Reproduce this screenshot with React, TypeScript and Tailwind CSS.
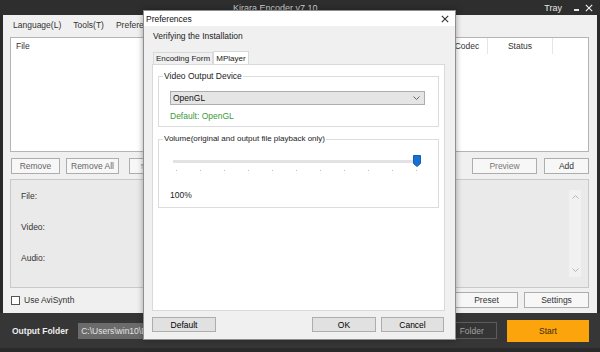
import React from "react";

const mainBtn =
  "h-[16px] border border-[#adadad] bg-[#f7f7f7] flex items-center justify-center shrink-0";
const dlgBtn =
  "h-[15px] border border-[#adadad] bg-[#e1e1e1] flex items-center justify-center text-[#000] shrink-0";

function Chevron({ up }: { up?: boolean }) {
  return (
    <svg width="7" height="4" viewBox="0 0 7 4" className="block">
      <path
        d={up ? "M0.5 3.5 L3.5 0.5 L6.5 3.5" : "M0.5 0.5 L3.5 3.5 L6.5 0.5"}
        fill="none"
        stroke="#b5b5b5"
        strokeWidth="1"
      />
    </svg>
  );
}

function CloseX({ size, color }: { size: number; color: string }) {
  return (
    <svg width={size} height={size} viewBox="0 0 10 10" className="block">
      <path d="M1 1 L9 9 M9 1 L1 9" stroke={color} strokeWidth="1.4" fill="none" />
    </svg>
  );
}

export default function App() {
  const ticks = Array.from({ length: 11 });
  return (
    <div className="relative w-[600px] h-[352px] overflow-hidden bg-[#2a2a2a] text-[8.5px] leading-[10px] text-[#333] font-['Liberation_Sans',Arial,sans-serif]">
      {/* Title bar */}
      <div className="flex h-[15px] items-center bg-[#2e2e2e] text-[#cfcfcf]">
        <span className="pl-[233px] text-[9px]">Kirara Encoder v7.10</span>
        <span className="ml-auto text-[9px] text-[#e6e6e6]">Tray</span>
        <div className="ml-[12px] mt-[5px] w-[5px] h-[2px] bg-[#e6e6e6]" />
        <div className="ml-[6px] mr-[7px]">
          <CloseX size={8} color="#f0f0f0" />
        </div>
      </div>

      {/* Main content */}
      <div className="mx-[3px] h-[298px] bg-[#f0f0f0] flex flex-col pl-[7px] pr-[8px]">
        {/* Menu */}
        <div className="h-[22px] flex items-center gap-[12px] pl-[3px] pb-[2px]">
          <span>Language(L)</span>
          <span>Tools(T)</span>
          <span>Preferences(P)</span>
        </div>

        {/* File list */}
        <div className="h-[115px] bg-white border border-[#b4b4b4]">
          <div className="flex h-[16px] items-center">
            <div className="flex-1 pl-[5px]">File</div>
            <div className="w-[41px] h-full flex items-center justify-center border-l border-[#e6e6e6]">
              Codec
            </div>
            <div className="w-[65px] h-full flex items-center justify-center border-l border-[#e6e6e6]">
              Status
            </div>
            <div className="w-[36px] h-full border-l border-[#e6e6e6]" />
          </div>
        </div>

        {/* Buttons row */}
        <div className="mt-[6px] flex h-[16px] text-[#666]">
          <div className={`${mainBtn} w-[49px] ml-[1px]`}>Remove</div>
          <div className={`${mainBtn} w-[53px] ml-[6px]`}>Remove All</div>
          <div className={`${mainBtn} w-[30px] ml-[10px]`}>↑↑</div>
          <div className={`${mainBtn} w-[65px] ml-auto text-[#777]`}>Preview</div>
          <div className={`${mainBtn} w-[45px] ml-[7px] text-[#333]`}>Add</div>
        </div>

        {/* Info panel */}
        <div className="mt-[5px] h-[109px] bg-[#eaeaea] border border-[#c9c9c9] flex">
          <div className="flex-1 flex flex-col gap-[21px] pl-[10px] pt-[11px]">
            <span>File:</span>
            <span>Video:</span>
            <span>Audio:</span>
          </div>
          <div className="w-[12px] mt-[10px] mb-[10px] mr-[7px] bg-[#f1f1f1] flex flex-col items-center justify-between py-[5px]">
            <Chevron up />
            <Chevron />
          </div>
        </div>

        {/* Bottom row */}
        <div className="mt-[4px] flex h-[16px] items-center">
          <div className="ml-[1px] w-[9px] h-[9px] border border-[#555] bg-white" />
          <span className="ml-[4px]">Use AviSynth</span>
          <div className={`${mainBtn} w-[63px] ml-auto`}>Preset</div>
          <div className={`${mainBtn} w-[65px] ml-[6px]`}>Settings</div>
        </div>
      </div>

      {/* Bottom bar */}
      <div className="h-[35px] bg-[#363636] flex items-center pl-[12px] pr-[11px]">
        <span className="font-bold text-[8.5px] text-[#eeeeee]">Output Folder</span>
        <div className="ml-[10px] w-[362px] h-[16px] bg-[#6b6b6b] flex items-center pl-[3px] text-[#e4e4e4]">
          C:\Users\win10\Desktop
        </div>
        <div className="ml-[6px] w-[51px] h-[17px] border border-[#5c5c5c] bg-[#353535] flex items-center justify-center text-[#a0a0a0]">
          Folder
        </div>
        <div className="ml-auto w-[82px] h-[22px] bg-[#fba40c] flex items-center justify-center text-[#3a2a10]">
          Start
        </div>
      </div>

      {/* Preferences dialog */}
      <div className="absolute left-[143px] top-[10px] w-[313px] h-[330px] bg-[#f0f0f0] border border-[#8f8f8f] shadow-[0_0_6px_rgba(0,0,0,0.35)] flex flex-col text-[#222]">
        <div className="h-[15px] bg-white flex items-center pl-[2px] pr-[6px]">
          <span className="text-[#111]">Preferences</span>
          <div className="ml-auto">
            <CloseX size={8} color="#333" />
          </div>
        </div>
        <div className="flex flex-col pl-[8px] pr-[10px]">
          <div className="pt-[5px] pl-[1px]">Verifying the Installation</div>

          {/* Tabs */}
          <div className="mt-[10px] flex items-end h-[14px] text-[8px]">
            <div className="h-[13px] w-[60px] ml-[1px] border border-b-0 border-[#d9d9d9] bg-[#f0f0f0] flex items-center justify-center">
              Encoding Form
            </div>
            <div className="h-[14px] w-[36px] border border-b-0 border-[#d9d9d9] bg-white flex items-center justify-center">
              MPlayer
            </div>
          </div>

          {/* Tab panel */}
          <div className="h-[247px] bg-white border border-[#d9d9d9] -mt-[1px] px-[5px]">
            <fieldset className="mt-[6px] border border-[#dcdcdc] pb-[5px]">
              <legend className="ml-[4px] px-[1px] leading-[10px]">Video Output Device</legend>
              <div className="mt-[10px] ml-[11px] w-[255px] h-[14px] bg-[#e5e5e5] border border-[#adadad] flex items-center pl-[2px] pr-[4px]">
                <span className="text-[#111]">OpenGL</span>
                <svg width="7" height="4" viewBox="0 0 7 4" className="ml-auto">
                  <path d="M0.5 0.5 L3.5 3.5 L6.5 0.5" fill="none" stroke="#666" strokeWidth="1" />
                </svg>
              </div>
              <div className="mt-[6px] ml-[11px] text-[#3a9a3a]">Default: OpenGL</div>
            </fieldset>

            <fieldset className="mt-[7px] border border-[#dcdcdc] pb-[7px]">
              <legend className="ml-[4px] px-[1px] leading-[10px] text-[8px]">
                Volume(original and output file playback only)
              </legend>
              <div className="relative mt-[16px] ml-[14px] w-[247px]">
                <div className="h-[3px] w-[244px] bg-[#e2e2e2]" />
                <svg
                  width="8"
                  height="12"
                  viewBox="0 0 8 12"
                  className="absolute left-[240px] -top-[5px]"
                >
                  <path d="M0.5 0.5 H7.5 V8.5 L4 11.5 L0.5 8.5 Z" fill="#1a6fd3" stroke="#155eb8" strokeWidth="1" />
                </svg>
                <div className="mt-[7px] ml-[3px] w-[241px] flex justify-between">
                  {ticks.map((_, i) => (
                    <div key={i} className="w-[1px] h-[1px] bg-[#bdbdbd]" />
                  ))}
                </div>
              </div>
              <div className="mt-[19px] ml-[11px]">100%</div>
            </fieldset>
          </div>

          {/* Dialog buttons */}
          <div className="mt-[6px] flex">
            <div className={`${dlgBtn} w-[64px]`}>Default</div>
            <div className={`${dlgBtn} w-[64px] ml-auto`}>OK</div>
            <div className={`${dlgBtn} w-[63px] ml-[5px] mr-[1px]`}>Cancel</div>
          </div>
        </div>
      </div>
    </div>
  );
}
